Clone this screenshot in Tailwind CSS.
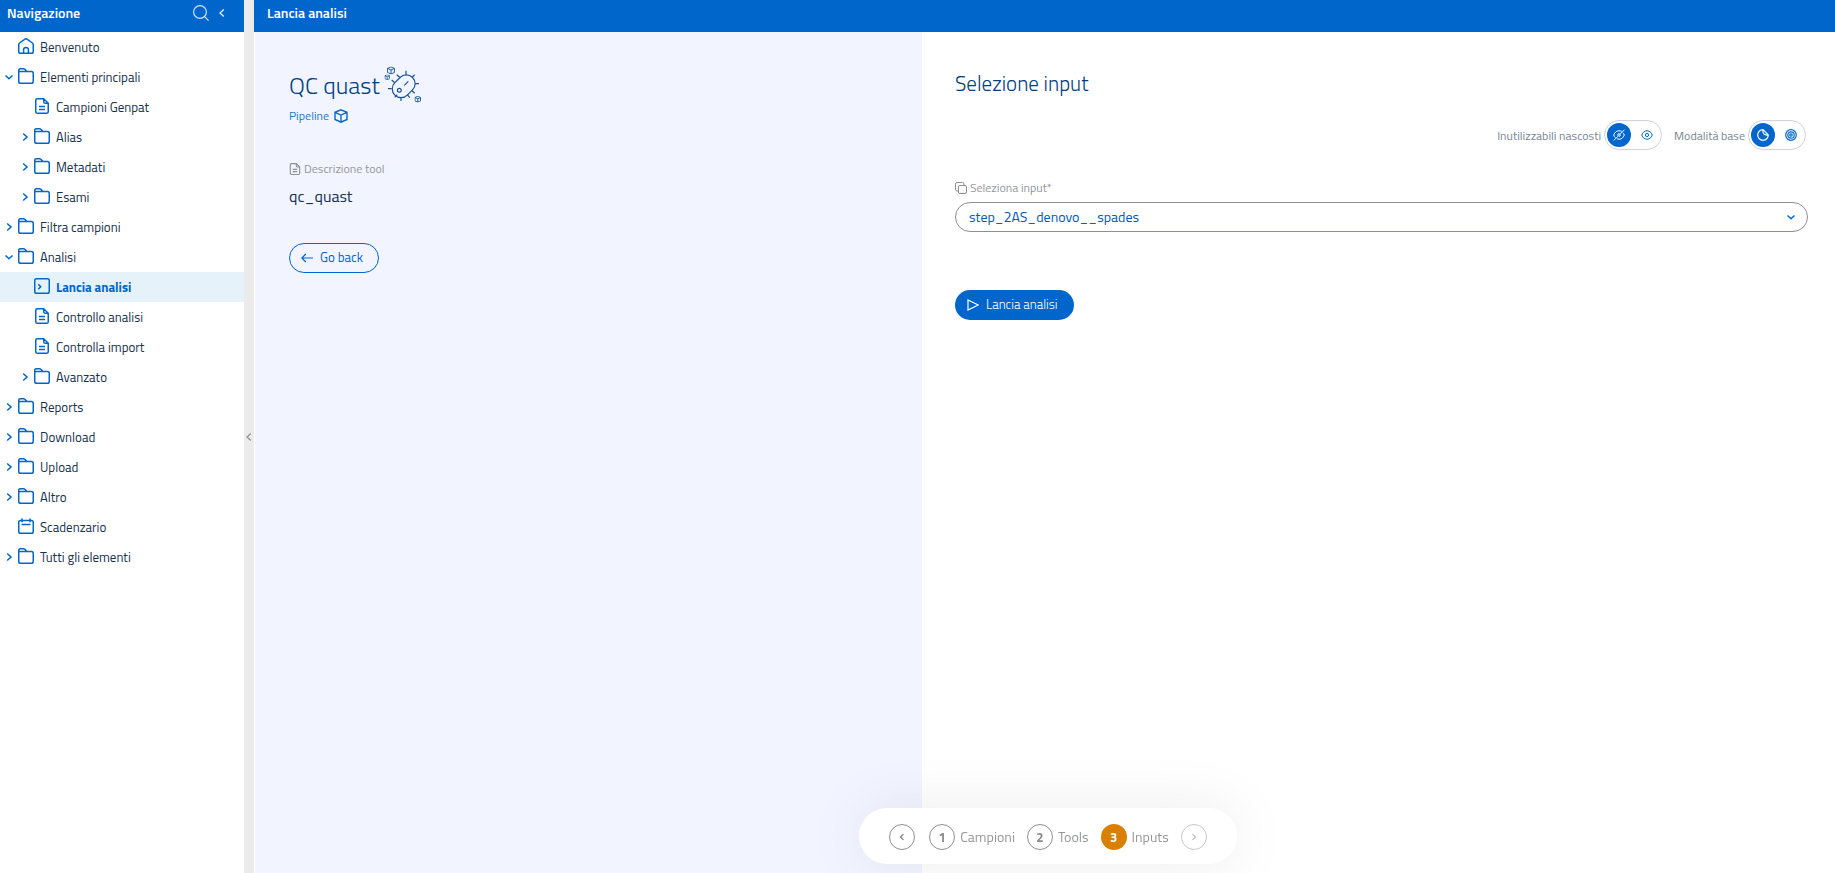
<!DOCTYPE html>
<html lang="it">
<head>
  <meta charset="UTF-8" />
  <meta name="viewport" content="width=device-width, initial-scale=1.0" />
  <title>Lancia analisi</title>
  <script src="https://cdn.jsdelivr.net/npm/@tailwindcss/browser@4"></script>
</head>
<body class="bg-white text-[#17324d] font-['Titillium_Web',Roboto,sans-serif] text-[13px]">

  <!-- Icone -->
  <svg class="hidden" aria-hidden="true">
    <symbol id="folder" viewBox="0 0 16 16"><path d="M.75 4V2.200Q.75.75 2.200.75h3.300q.8 0 1.300.5L9 3.500M.75 3.500h12.700q1.800 0 1.800 1.800v8.100q0 1.800-1.800 1.800H2.550q-1.800 0-1.800-1.800z" /></symbol>
    <symbol id="home" viewBox="0 0 16 16"><path d="M.75 6.600q0-1 .8-1.600L7 1.100q1-.7 2 0L14.450 5q.8.6.8 1.600v6.800q0 1.850-1.850 1.850H2.600Q.75 15.250.75 13.400zM5.600 15V11.800a2.400 2.400 0 0 1 4.800 0V15" /></symbol>
    <symbol id="file" viewBox="0 0 16 16"><path d="M9.700.75H3.300q-1.550 0-1.550 1.600v11.300q0 1.600 1.550 1.600h9.400q1.550 0 1.550-1.600V5.300zM9.700.75V3.700q0 1.600 1.600 1.600h2.950M5 8.500h6M5 11.500h6" /></symbol>
    <symbol id="terminal" viewBox="0 0 16 16"><rect x=".75" y=".75" width="14.500" height="14.500" rx="1.800" /><path d="M4.300 6.300l2.400 2.500-2.400 2.500" /></symbol>
    <symbol id="calendar" viewBox="0 0 16 16"><rect x=".75" y="2.500" width="14.500" height="12.750" rx="1.800" /><path d="M4 .5v3.700M12 .5v3.700M3.500 6.500h9" /></symbol>
    <symbol id="right" viewBox="0 0 10 10"><path d="M3.200 1.500L7 5 3.200 8.500" /></symbol>
    <symbol id="left" viewBox="0 0 10 10"><path d="M6.800 1.500L3 5l3.800 3.500" /></symbol>
    <symbol id="down" viewBox="0 0 10 10"><path d="M1.500 3.500L5 6.800l3.500-3.300" /></symbol>
    <symbol id="search" viewBox="0 0 16 16"><circle cx="7" cy="7" r="6.400" /><path d="M11.600 11.600l4 4" /></symbol>
    <symbol id="cube" viewBox="0 0 14 14"><path d="M7 .8l6 2.500v7.200L7 13.200 1 10.500V3.300zM1 3.300l6 2.800 6-2.800M7 6.100v7" /></symbol>
    <symbol id="copy" viewBox="0 0 12 12"><rect x="3.500" y="3.500" width="8" height="8" rx="1.500" /><path d="M3.500 9H2Q.5 9 .5 7.500V2Q.5.5 2 .5h5.500Q9 .5 9 2v1.500" /></symbol>
    <symbol id="eye" viewBox="0 0 12 12"><path d="M.7 6Q2.300 1.800 6 1.800T11.300 6Q9.700 10.200 6 10.200T.7 6z" /><circle cx="6" cy="6" r="1.600" /></symbol>
    <symbol id="eye-off" viewBox="0 0 12 12"><path d="M8.800 2.400Q7.600 1.800 6 1.800 2.300 1.800.7 6q.5 1.700 1.700 2.700M4 9.700q.9.500 2 .5 3.700 0 5.300-4.200-.4-1.300-1.200-2.200M11.500.700L.8 11.500M4.500 6.400Q4.500 4.500 6.500 4.500M7.500 5.800Q7.500 7.200 6 7.500" /></symbol>
    <symbol id="sticker" viewBox="0 0 12 12"><path d="M6 .7a5.300 5.300 0 1 0 5.300 5.300zM6 .7q-.6 2.700.8 4.200T11.300 6" /></symbol>
    <symbol id="target" viewBox="0 0 12 12"><circle cx="6" cy="6" r="5.300" /><circle cx="6" cy="6" r="3.200" /><circle cx="6" cy="6" r="1.200" /></symbol>
  </svg>

  <div class="flex min-h-screen">
    <!-- Navigazione -->
    <aside class="w-61 shrink-0">
      <header class="flex h-8 items-center bg-[#0066cc] pl-[7px] pr-[15px] pb-1.5 text-white">
        <h2 class="flex-1 text-sm font-semibold">Navigazione</h2>
        <button type="button" aria-label="Cerca" class="mr-2">
          <svg class="size-4 fill-none stroke-white/80 stroke-[1.2]"><use href="#search" /></svg>
        </button>
        <button type="button" aria-label="Comprimi">
          <svg class="size-2.5 mr-0.5 fill-none stroke-white/90 stroke-[1.3]"><use href="#left" /></svg>
        </button>
      </header>
      <nav><ul id="menu"></ul></nav>
    </aside>

    <button type="button" aria-label="Chiudi navigazione" class="flex w-2.5 shrink-0 items-center justify-center bg-[#ebebeb]">
      <svg class="size-2.5 fill-none stroke-[#8f8f8f] stroke-[1.2]"><use href="#left" /></svg>
    </button>

    <div class="flex flex-1 flex-col">
      <header class="flex h-8 items-center bg-[#0066cc] px-[13px] pb-1.5 text-white">
        <h1 class="text-sm font-semibold">Lancia analisi</h1>
      </header>

      <div class="flex flex-1">
        <!-- Tool -->
        <section class="w-[42.25%] border-l border-white bg-[#f2f4ff] px-[34px] pt-[34px]">
          <div class="flex h-9 items-center gap-1">
            <h2 class="pt-0.5 text-2xl font-light text-[#004080]">QC quast</h2>
            <svg viewBox="0 0 37 37" class="size-[37px] fill-none stroke-[#1a5390] stroke-[1.2]" aria-hidden="true">
              <rect x="7.200" y="11.500" width="25" height="17.600" rx="8.800" transform="rotate(-45 19.700 20.300)" />
              <path d="M22 4.700v4M30.700 8.700L28 11.300M31.300 17.700H35M28 24.700l2.700 2.600M23.300 28.700l2.400 3M17 31.300V35M13.300 28.700l-2.600 2.600M4 22.700h3.700M7.700 14l3 2.700M12.700 8.700l3 2.600M20.300 19.300l4-4" />
              <circle cx="15.300" cy="24.300" r="1.900" />
              <use href="#cube" x="3" y=".5" width="8" height="8" class="stroke-[1.6]" />
              <use href="#cube" x=".5" y="8.500" width="5.500" height="5.500" class="stroke-[2]" />
              <use href="#cube" x="30.500" y="30" width="6.500" height="6.500" class="stroke-[2]" />
            </svg>
          </div>
          <a href="#" class="mt-1.5 flex h-4 w-fit items-center gap-[5px] text-xs text-[#2078d2]">
            Pipeline
            <svg class="size-3.5 fill-none stroke-[#0066cc] stroke-[1.4]"><use href="#cube" /></svg>
          </a>
          <h3 class="mt-[37px] flex h-4 items-center gap-[3px] text-xs text-[#95969d]">
            <svg class="size-3 fill-none stroke-[#8f8f94] stroke-[1.5]"><use href="#file" /></svg>
            Descrizione tool
          </h3>
          <p class="mt-[7px] text-base leading-6">qc_quast</p>
          <button type="button" class="mt-[35px] flex h-7.5 items-center gap-[7px] rounded-full border border-[#0066cc] px-[11px] pr-[15px] text-[#0066cc]">
            <svg viewBox="0 0 12 12" class="size-3 fill-none stroke-[#0066cc] stroke-[1.2]"><path d="M12 6H.8M4.800 2l-4 4 4 4" /></svg>
            Go back
          </button>
        </section>

        <!-- Input -->
        <section class="flex-1 pl-[33px] pr-[27px] pt-[35px]">
          <h2 class="text-[21px] leading-8 font-light text-[#004080]">Selezione input</h2>

          <div class="mt-[21px] flex justify-end gap-3 pr-0.5 text-xs text-[#768594]">
            <div role="radiogroup" aria-labelledby="inutilizzabili" class="flex items-center gap-[3px]">
              <span id="inutilizzabili" class="pt-0.5">Inutilizzabili nascosti</span>
              <div class="flex h-7.5 items-center gap-1 rounded-full border border-[#d0d0de] px-0.5">
                <label class="relative flex size-6 items-center justify-center rounded-full has-checked:bg-[#0066cc] text-[#0066cc] has-checked:text-white">
                  <input type="radio" name="visibilita" aria-label="Nascosti" class="sr-only" checked />
                  <svg class="size-3 fill-none stroke-current"><use href="#eye-off" /></svg>
                </label>
                <label class="relative flex size-6 items-center justify-center rounded-full has-checked:bg-[#0066cc] text-[#0066cc] has-checked:text-white">
                  <input type="radio" name="visibilita" aria-label="Visibili" class="sr-only" />
                  <svg class="size-3 fill-none stroke-current"><use href="#eye" /></svg>
                </label>
              </div>
            </div>
            <div role="radiogroup" aria-labelledby="modalita" class="flex items-center gap-[3px]">
              <span id="modalita" class="pt-0.5">Modalità base</span>
              <div class="flex h-7.5 items-center gap-1 rounded-full border border-[#d0d0de] px-0.5">
                <label class="relative flex size-6 items-center justify-center rounded-full has-checked:bg-[#0066cc] text-[#0066cc] has-checked:text-white">
                  <input type="radio" name="modalita" aria-label="Base" class="sr-only" checked />
                  <svg class="size-3 fill-none stroke-current stroke-[1.2]"><use href="#sticker" /></svg>
                </label>
                <label class="relative flex size-6 items-center justify-center rounded-full has-checked:bg-[#0066cc] text-[#0066cc] has-checked:text-white">
                  <input type="radio" name="modalita" aria-label="Avanzata" class="sr-only" />
                  <svg class="size-3 fill-none stroke-current stroke-[1.2]"><use href="#target" /></svg>
                </label>
              </div>
            </div>
          </div>

          <label for="input" class="mt-[30px] flex h-4 items-center gap-[3px] text-xs text-[#95969d]">
            <svg class="size-3 fill-none stroke-[#8f8f94]"><use href="#copy" /></svg>
            Seleziona input*
          </label>
          <div class="relative mt-1.5">
            <select id="input" class="h-7.5 w-full appearance-none rounded-full border border-[#8e8f96] bg-white px-[13px] text-sm text-[#0059b3]">
              <option>step_2AS_denovo__spades</option>
            </select>
            <svg class="pointer-events-none absolute right-3 top-2.5 size-2.5 fill-none stroke-[#0066cc] stroke-[1.4]"><use href="#down" /></svg>
          </div>

          <button type="button" class="mt-[58px] flex h-7.5 items-center gap-[7px] rounded-full bg-[#0066cc] px-3 pr-4 font-light text-white">
            <svg viewBox="0 0 12 12" class="size-3 fill-none stroke-white stroke-[1.2]"><path d="M1 1l10.300 5L1 11z" /></svg>
            Lancia analisi
          </button>
        </section>
      </div>
    </div>
  </div>

  <!-- Passi -->
  <nav aria-label="Passi" class="fixed inset-x-0 bottom-[9px] flex justify-center pl-[261px] text-sm text-[#95969d] pointer-events-none">
    <div class="pointer-events-auto flex h-14 items-center gap-3 rounded-full bg-white px-[30px] pt-0.5 shadow-[0_0_60px_rgba(0,0,0,0.08)]">
      <button type="button" aria-label="Indietro" class="mr-0.5 flex size-6.5 items-center justify-center rounded-full border border-[#8f8f94]">
        <svg class="size-2 fill-none stroke-[#77777c] stroke-[1.4]"><use href="#left" /></svg>
      </button>
      <a href="#" class="flex items-center gap-[5px]">
        <span class="flex size-6.5 items-center justify-center rounded-full border border-[#8f8f94] text-[13px] font-bold text-[#8a8a90]">1</span>
        Campioni
      </a>
      <a href="#" class="flex items-center gap-[5px]">
        <span class="flex size-6.5 items-center justify-center rounded-full border border-[#8f8f94] text-[13px] font-bold text-[#8a8a90]">2</span>
        Tools
      </a>
      <a href="#" aria-current="step" class="flex items-center gap-[5px]">
        <span class="flex size-6.5 items-center justify-center rounded-full bg-[#d98000] text-[13px] font-bold text-white">3</span>
        Inputs
      </a>
      <button type="button" aria-label="Avanti" disabled class="flex size-6.5 items-center justify-center rounded-full border border-[#8f8f94] opacity-50">
        <svg class="size-2 fill-none stroke-[#77777c] stroke-[1.4]"><use href="#right" /></svg>
      </button>
    </div>
  </nav>

  <script>
    // [testo, livello, icona, freccia]
    const voci = [
      ['Benvenuto', 0, 'home', ''],
      ['Elementi principali', 0, 'folder', 'down'],
      ['Campioni Genpat', 1, 'file', ''],
      ['Alias', 1, 'folder', 'right'],
      ['Metadati', 1, 'folder', 'right'],
      ['Esami', 1, 'folder', 'right'],
      ['Filtra campioni', 0, 'folder', 'right'],
      ['Analisi', 0, 'folder', 'down'],
      ['Lancia analisi', 1, 'terminal', ''],
      ['Controllo analisi', 1, 'file', ''],
      ['Controlla import', 1, 'file', ''],
      ['Avanzato', 1, 'folder', 'right'],
      ['Reports', 0, 'folder', 'right'],
      ['Download', 0, 'folder', 'right'],
      ['Upload', 0, 'folder', 'right'],
      ['Altro', 0, 'folder', 'right'],
      ['Scadenzario', 0, 'calendar', ''],
      ['Tutti gli elementi', 0, 'folder', 'right'],
    ];

    const menu = document.getElementById('menu');
    voci.forEach(([testo, livello, icona, freccia]) => {
      const attiva = testo === 'Lancia analisi';
      const li = document.createElement('li');
      li.innerHTML = `
        <a href="#" class="flex h-7.5 items-center ${livello ? 'pl-5' : 'pl-1'} ${attiva ? 'bg-[#e5f2fa] font-bold text-[#0066cc]' : ''}">
          <svg class="mr-1 size-2.5 fill-none stroke-[#0066cc] stroke-[1.5]">${freccia ? `<use href="#${freccia}" />` : ''}</svg>
          <svg class="mr-1.5 mb-0.5 size-4 fill-none stroke-[#0066cc] stroke-[1.5]"><use href="#${icona}" /></svg>
          <span class="pt-0.5">${testo}</span>
        </a>`;
      menu.appendChild(li);
    });
  </script>
</body>
</html>
